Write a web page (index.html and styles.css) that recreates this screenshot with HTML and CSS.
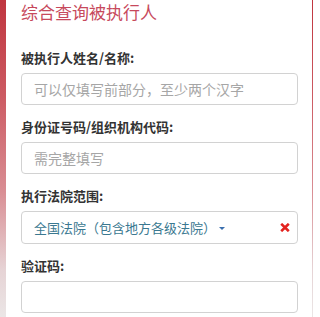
FILE: index.html
```html
<!DOCTYPE html>
<html lang="zh">
<head>
<meta charset="utf-8">
<title>综合查询被执行人</title>
<link rel="stylesheet" href="styles.css">
</head>
<body>
<div class="page">
  <div class="card">
    <h1 class="title">综合查询被执行人</h1>
    <div class="fields">
      <div class="field">
        <label class="label">被执行人姓名/名称:</label>
        <input class="input" type="text" placeholder="可以仅填写前部分，至少两个汉字">
      </div>
      <div class="field">
        <label class="label">身份证号码/组织机构代码:</label>
        <input class="input" type="text" placeholder="需完整填写">
      </div>
      <div class="field">
        <label class="label">执行法院范围:</label>
        <div class="select">
          <span class="select-text">全国法院（包含地方各级法院）</span>
          <span class="caret"></span>
          <svg class="clear" width="10" height="9" viewBox="0 0 10 9"><path d="M1.2 0.8 L8.8 8.2 M8.8 0.8 L1.2 8.2" stroke="#e3231f" stroke-width="2.6" stroke-linecap="butt" fill="none"/></svg>
        </div>
      </div>
      <div class="field">
        <label class="label">验证码:</label>
        <input class="input" type="text">
      </div>
    </div>
  </div>
</div>
</body>
</html>
```
FILE: styles.css
```css
html, body {
  margin: 0;
  padding: 0;
  background: #ffffff;
}
body {
  font-family: "Noto Sans CJK SC", "Noto Sans", sans-serif;
}
.page {
  width: 313px;
  height: 317px;
  display: flex;
  background: linear-gradient(to bottom, #c0353f 0%, #cc5a62 30%, #d98d93 60%, #e6d3d5 85%, #ebe6e6 100%);
  overflow: hidden;
}
.card {
  margin-left: 6px;
  width: 306px;
  box-sizing: border-box;
  padding: 0 14px 0 15px;
  background: #ffffff;
}
.title {
  margin: 0;
  font-size: 17px;
  line-height: 24px;
  font-weight: normal;
  color: #c7495c;
}
.fields {
  margin-top: 24px;
  display: flex;
  flex-direction: column;
  gap: 12px;
}
.field {
  display: flex;
  flex-direction: column;
  gap: 5px;
}
.label {
  font-size: 13px;
  line-height: 20px;
  font-weight: bold;
  color: #333333;
}
.input {
  box-sizing: border-box;
  height: 32px;
  width: 100%;
  margin: 0;
  padding: 0 12px;
  border: 1px solid #d2d2d2;
  border-radius: 4px;
  font-family: inherit;
  font-size: 14px;
  color: #333;
  background: #fff;
  outline: none;
}
.input::placeholder {
  color: #a6a6a6;
}
.select {
  box-sizing: border-box;
  height: 33px;
  display: flex;
  align-items: center;
  padding: 0 7px 0 12px;
  border: 1px solid #d2d2d2;
  border-radius: 4px;
}
.select-text {
  font-size: 13px;
  color: #3a7890;
}
.caret {
  margin-left: 3px;
  width: 0;
  height: 0;
  border-left: 3px solid transparent;
  border-right: 3px solid transparent;
  border-top: 3px solid #3a6fae;
  margin-top: 2px;
}
.clear {
  margin-left: auto;
}
```
